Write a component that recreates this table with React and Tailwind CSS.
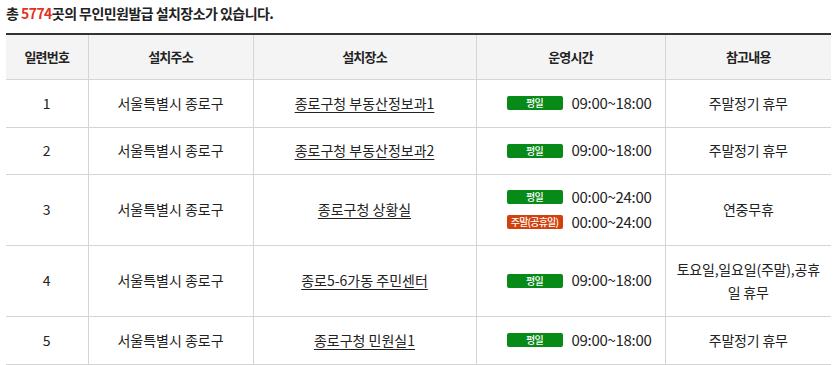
import React from 'react'

const rows = [
  { no: 1, addr: '서울특별시 종로구', place: '종로구청 부동산정보과1', times: [['평일', '09:00~18:00']], note: '주말정기 휴무', h: 'h-[48px]' },
  { no: 2, addr: '서울특별시 종로구', place: '종로구청 부동산정보과2', times: [['평일', '09:00~18:00']], note: '주말정기 휴무', h: 'h-[47px]' },
  { no: 3, addr: '서울특별시 종로구', place: '종로구청 상황실', times: [['평일', '00:00~24:00'], ['주말(공휴일)', '00:00~24:00']], note: '연중무휴', h: 'h-[71px]' },
  { no: 4, addr: '서울특별시 종로구', place: '종로5-6가동 주민센터', times: [['평일', '09:00~18:00']], note: '토요일,일요일(주말),공휴일 휴무', h: 'h-[71px]' },
  { no: 5, addr: '서울특별시 종로구', place: '종로구청 민원실1', times: [['평일', '09:00~18:00']], note: '주말정기 휴무', h: 'h-[48px]' },
]

const Badge = ({ label }) => {
  const isWeekday = label === '평일'
  return (
    <span
      className={`inline-flex items-center justify-center w-[56px] h-[14px] rounded-[2px] text-[10px] font-medium leading-none text-white tracking-[-0.8px] ${isWeekday ? 'bg-[#078a18]' : 'bg-[#d2400c]'}`}
    >
      {label}
    </span>
  )
}

const App = () => {
  return (
    <div className="w-[837px] h-[365px] bg-white text-[#222] overflow-hidden" style={{ fontFamily: '"Noto Sans CJK KR", "Noto Sans", sans-serif' }}>
      <div className="pl-[6px] pt-[3px] h-[33px] text-[14px] font-bold tracking-[-0.55px] leading-[20px]">
        총 <span className="text-[#e2321f]">5774</span>곳의 무인민원발급 설치장소가 있습니다.
      </div>
      <div className="pl-[6px]">
        <table className="w-[825px] border-collapse table-fixed text-[14px]">
          <colgroup>
            <col className="w-[82px]" />
            <col className="w-[165px]" />
            <col className="w-[223px]" />
            <col className="w-[189px]" />
            <col className="w-[166px]" />
          </colgroup>
          <thead>
            <tr className="h-[45px] bg-[#f4f4f4] border-t-2 border-[#333] text-[13px] font-bold tracking-[-0.8px]">
              <th className="border-b border-[#d5d5d5]">일련번호</th>
              <th className="border-b border-l border-[#d5d5d5]">설치주소</th>
              <th className="border-b border-l border-[#d5d5d5]">설치장소</th>
              <th className="border-b border-l border-[#d5d5d5]">운영시간</th>
              <th className="border-b border-l border-[#d5d5d5]">참고내용</th>
            </tr>
          </thead>
          <tbody>
            {rows.map((r) => (
              <tr key={r.no} className={`${r.h} text-center`}>
                <td className="border-b border-[#d5d5d5]">{r.no}</td>
                <td className="border-b border-l border-[#d5d5d5]">{r.addr}</td>
                <td className="border-b border-l border-[#d5d5d5]">
                  <span className="underline underline-offset-[3px]">{r.place}</span>
                </td>
                <td className="border-b border-l border-[#d5d5d5] pl-[30px] text-left">
                  <div className="flex flex-col gap-[3px]">
                    {r.times.map(([label, time]) => (
                      <div key={label} className="flex items-center gap-[9px] h-[22px]">
                        <Badge label={label} />
                        <span className="text-[15px] tracking-[-0.3px]">{time}</span>
                      </div>
                    ))}
                  </div>
                </td>
                <td className="border-b border-l border-[#d5d5d5] px-[5px] leading-[23px] tracking-[-0.2px]">{r.note}</td>
              </tr>
            ))}
          </tbody>
        </table>
      </div>
    </div>
  )
}

export default App
